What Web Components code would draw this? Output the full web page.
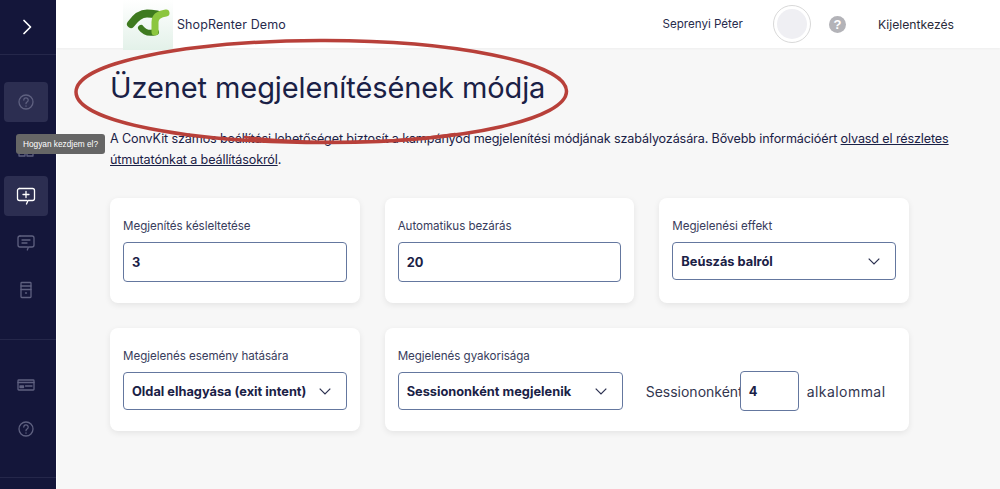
<!DOCTYPE html>
<html lang="hu">
<head>
<meta charset="utf-8">
<title>Üzenet megjelenítésének módja</title>
<style>
  html, body { margin: 0; height: 100%; overflow: hidden; }
  body { font-family: Inter, "Liberation Sans", sans-serif; color: #1a2146; background: #f7f7f7; }
  app-shell { height: 489px; }
</style>
</head>
<body>
<app-shell>
  <side-bar slot="side">
    <side-section slot="top" height="54" justify="center">
      <side-item icon="chevron" tone="bright"></side-item>
    </side-section>
    <side-section height="284" pad="27" gap="7">
      <side-item icon="help" boxed></side-item>
      <side-item icon="grid"></side-item>
      <side-item icon="add" boxed tone="bright"></side-item>
      <side-item icon="chat"></side-item>
      <side-item icon="doc"></side-item>
    </side-section>
    <side-section height="137" pad="25" gap="4">
      <side-item icon="card"></side-item>
      <side-item icon="help"></side-item>
    </side-section>
    <hover-tip>Hogyan kezdjem el?</hover-tip>
  </side-bar>

  <top-bar slot="top"></top-bar>

  <page-head slot="main">
    <span slot="title">Üzenet megjelenítésének módja</span>
    A ConvKit számos beállítási lehetőséget biztosít a kampányod megjelenítési módjának szabályozására. Bővebb információért <a href="#">olvasd el részletes útmutatónkat a beállításokról</a>.
  </page-head>

  <card-grid slot="main">
    <form-card label="Megjenítés késleltetése"><text-box value="3"></text-box></form-card>
    <form-card label="Automatikus bezárás"><text-box value="20"></text-box></form-card>
    <form-card label="Megjelenési effekt"><pick-box value="Beúszás balról"></pick-box></form-card>
    <form-card label="Megjelenés esemény hatására"><pick-box value="Oldal elhagyása (exit intent)"></pick-box></form-card>
    <form-card label="Megjelenés gyakorisága" wide>
      <freq-row></freq-row>
    </form-card>
  </card-grid>
  <red-mark slot="main"></red-mark>
</app-shell>

<script>
const ICONS = {
  chevron: '<path d="m10 5.500 6.500 6.500L10 18.500" stroke-width="1.700"/>',
  help: '<circle cx="12" cy="12" r="7"/><path d="M9.800 10a2.200 2.200 0 1 1 3.500 1.800c-.8.500-1.300 1-1.300 1.900"/><path d="M12 15.800v.4"/>',
  grid: '<rect x="5" y="5" width="6" height="6"/><rect x="13" y="5" width="6" height="6"/><rect x="5" y="13" width="6" height="6"/><rect x="13" y="13" width="6" height="6"/>',
  add: '<path d="M5.500 4.500h13a2 2 0 0 1 2 2v8a2 2 0 0 1-2 2h-4.500l-1.500 3.500"/><path d="M13 16.500H5.500a2 2 0 0 1-2-2v-8a2 2 0 0 1 2-2"/><path d="M12 7.500v6M9 10.500h6"/>',
  chat: '<path d="M6 5h12a2 2 0 0 1 2 2v7a2 2 0 0 1-2 2h-3.500l-1.200 3"/><path d="M13.500 16H6a2 2 0 0 1-2-2V7a2 2 0 0 1 2-2"/><path d="M8 9h8M8 12h5"/>',
  doc: '<rect x="7" y="4.500" width="10" height="15" rx=".8"/><path d="M7 8h10M7 11.500h10"/><path d="M11.500 15h1"/>',
  card: '<rect x="4" y="7" width="16" height="10" rx=".8"/><path d="M4 9.500h16"/><path d="M6 13h3.500v1.500H6zM11.500 13h6.500"/>'
};

class AppShell extends HTMLElement {
  constructor() {
    super();
    this.attachShadow({ mode: "open" });
    this.shadowRoot.innerHTML = `
      <style>
        :host { display: grid; grid-template-columns: 56px 1fr; grid-template-rows: 48px 1fr; }
        .side { grid-row: 1 / 3; }
        .top { grid-column: 2; position: relative; z-index: 1; }
        main { grid-column: 2; position: relative; padding: 0 0 0 53px; background: #f7f7f7; border-left: 1px solid #fff; box-sizing: border-box; }
      </style>
      <div class="side"><slot name="side"></slot></div>
      <div class="top"><slot name="top"></slot></div>
      <main><slot name="main"></slot></main>
    `;
  }
}

class SideBar extends HTMLElement {
  constructor() {
    super();
    this.attachShadow({ mode: "open" });
    this.shadowRoot.innerHTML = `
      <style>
        :host { display: flex; flex-direction: column; position: relative; height: 489px; width: 56px; background: #14163a; }
      </style>
      <slot name="top"></slot>
      <slot></slot>
    `;
  }
}

class SideSection extends HTMLElement {
  constructor() {
    super();
    this.attachShadow({ mode: "open" });
    const pad = this.getAttribute("pad") || 0;
    const gap = this.getAttribute("gap") || 0;
    const justify = this.getAttribute("justify") || "flex-start";
    this.shadowRoot.innerHTML = `
      <style>
        :host {
          display: flex; flex-direction: column; align-items: flex-start; box-sizing: content-box;
          height: ${this.getAttribute("height") - pad}px; padding: ${pad}px 0 0 4px; gap: ${gap}px;
          justify-content: ${justify}; border-bottom: 1px solid #25274a;
        }
      </style>
      <slot></slot>
    `;
  }
}

class SideItem extends HTMLElement {
  constructor() {
    super();
    this.attachShadow({ mode: "open" });
    const icon = ICONS[this.getAttribute("icon")];
    const bright = this.getAttribute("tone") === "bright";
    this.shadowRoot.innerHTML = `
      <style>
        :host { display: flex; align-items: center; justify-content: center; width: 44px; height: 40px; border-radius: 4px; color: ${bright ? "#fff" : "#5f6180"}; }
        :host([boxed]) { background: #2c2e51; }
        svg { width: 24px; height: 24px; fill: none; stroke: currentColor; stroke-width: 1.300; stroke-linecap: round; stroke-linejoin: round; }
      </style>
      <svg viewBox="0 0 24 24">${icon}</svg>
    `;
  }
}

class HoverTip extends HTMLElement {
  constructor() {
    super();
    this.attachShadow({ mode: "open" });
    this.shadowRoot.innerHTML = `
      <style>
        :host {
          position: absolute; left: 16px; top: 134px; width: 89px; height: 20px; z-index: 5;
          display: flex; align-items: center; justify-content: center; border-radius: 3px;
          background: #666; color: #fff; font: 8.300px "Liberation Sans", sans-serif; white-space: nowrap;
        }
      </style>
      <slot></slot>
    `;
  }
}

class TopBar extends HTMLElement {
  constructor() {
    super();
    this.attachShadow({ mode: "open" });
    this.shadowRoot.innerHTML = `
      <style>
        :host { display: flex; align-items: center; height: 48px; background: #fff; box-shadow: 0 1px 2px rgba(0,0,0,.04); font-size: 12.500px; color: #272b4d; }
        .logo { width: 50px; height: 50px; margin: 0 4px 0 67px; align-self: flex-start; background: linear-gradient(#fff, #e3f1e9); flex: none; }
        .name { letter-spacing: .1px; }
        .user { margin-left: auto; font-size: 11.600px; }
        .avatar { width: 38px; height: 38px; margin-left: 30px; border-radius: 50%; border: 1px solid #d9d9d9; background: #fff; box-sizing: border-box; display: flex; align-items: center; justify-content: center; flex: none; }
        .avatar i { width: 30px; height: 30px; border-radius: 50%; background: #efeff3; }
        .q { width: 17px; height: 17px; margin-left: 18px; border-radius: 50%; background: #b3b3b8; color: #fff; font: bold 13px/17px "Liberation Sans", sans-serif; text-align: center; flex: none; }
        .out { margin: 0 46px 0 32px; font-size: 12.200px; color: #2a2a3a; }
      </style>
      <div class="logo">
        <svg viewBox="0 0 50 50" width="50" height="50" fill="none" stroke-linecap="round">
          <path d="M8 24C13 17 18 13.500 24 13.500c4 0 7 .5 10 1" stroke="#3e7a1f" stroke-width="8"/>
          <path d="M18 28c3 4 8 6 15 4" stroke="#3e7a1f" stroke-width="6"/>
          <path d="M32 32V22c0-5 4-8 11-9" stroke="#8cc63f" stroke-width="7"/>
        </svg>
      </div>
      <span class="name">ShopRenter Demo</span>
      <span class="user">Seprenyi Péter</span>
      <div class="avatar"><i></i></div>
      <div class="q">?</div>
      <span class="out">Kijelentkezés</span>
    `;
  }
}

class PageHead extends HTMLElement {
  constructor() {
    super();
    this.attachShadow({ mode: "open" });
    this.shadowRoot.innerHTML = `
      <style>
        :host { display: block; width: 840px; }
        h1 { margin: 0; padding-top: 22px; font-size: 29px; line-height: 36px; font-weight: 400; color: #1a2146; letter-spacing: -.1px; }
        p { margin: 22px 0 0; font-size: 12.600px; line-height: 21px; color: #1a2146; letter-spacing: -.13px; }
        ::slotted(a) { color: inherit; }
      </style>
      <h1><slot name="title"></slot></h1>
      <p><slot></slot></p>
    `;
  }
}

class CardGrid extends HTMLElement {
  constructor() {
    super();
    this.attachShadow({ mode: "open" });
    this.shadowRoot.innerHTML = `
      <style>
        :host { display: grid; grid-template-columns: repeat(3, 1fr); gap: 25px; width: 799px; margin-top: 28px; }
      </style>
      <slot></slot>
    `;
  }
}

class FormCard extends HTMLElement {
  constructor() {
    super();
    this.attachShadow({ mode: "open" });
    this.shadowRoot.innerHTML = `
      <style>
        :host { display: block; box-sizing: border-box; padding: 20px 13px 21px; background: #fff; border-radius: 8px; box-shadow: 0 2px 6px rgba(0,0,0,.08); }
        :host([wide]) { grid-column: span 2; }
        label { display: block; height: 16px; margin-bottom: 8px; font-size: 11.600px; line-height: 16px; color: #383c5c; letter-spacing: -.05px; }
      </style>
      <label>${this.getAttribute("label")}</label>
      <slot></slot>
    `;
  }
}

const FIELD_CSS = `
  .box { box-sizing: border-box; display: flex; align-items: center; background: #fff; border: 1.500px solid #64779f; border-radius: 4px; padding: 0 8px; font-size: 12.800px; font-weight: 700; color: #1a2146; white-space: nowrap; }
`;

class TextBox extends HTMLElement {
  constructor() {
    super();
    this.attachShadow({ mode: "open" });
    this.shadowRoot.innerHTML = `
      <style>
        :host { display: block; }
        ${FIELD_CSS}
        .box { height: 40px; }
      </style>
      <div class="box">${this.getAttribute("value")}</div>
    `;
  }
}

class PickBox extends HTMLElement {
  constructor() {
    super();
    this.attachShadow({ mode: "open" });
    this.shadowRoot.innerHTML = `
      <style>
        :host { display: block; }
        ${FIELD_CSS}
        .box { height: 38px; justify-content: space-between; }
        svg { width: 12px; height: 7px; margin-right: 7px; fill: none; stroke: #2b3050; stroke-width: 1.200; flex: none; }
      </style>
      <div class="box"><span>${this.getAttribute("value")}</span>
        <svg viewBox="0 0 12 7"><path d="m.7.7 5.300 5.300L11.300.7"/></svg></div>
    `;
  }
}

class FreqRow extends HTMLElement {
  constructor() {
    super();
    this.attachShadow({ mode: "open" });
    this.shadowRoot.innerHTML = `
      <style>
        :host { display: flex; align-items: center; height: 38px; font-size: 14px; color: #33364f; white-space: nowrap; }
        pick-box { width: 225px; flex: none; }
        .lead { width: 94px; margin-left: 23px; flex: none; }
        .num { width: 59px; margin-right: 8px; flex: none; position: relative; }
        .tail { letter-spacing: .45px; }
      </style>
      <pick-box value="Sessiononként megjelenik"></pick-box>
      <span class="lead">Sessiononként</span>
      <text-box class="num" value="4"></text-box>
      <span class="tail">alkalommal</span>
    `;
  }
}

class RedMark extends HTMLElement {
  constructor() {
    super();
    this.attachShadow({ mode: "open" });
    this.shadowRoot.innerHTML = `
      <style>
        :host { position: absolute; left: -57px; top: -48px; width: 1000px; height: 489px; pointer-events: none; z-index: 4; }
      </style>
      <svg width="1000" height="489" fill="none" stroke="#b8403a" stroke-width="3.500" stroke-linecap="round">
        <path d="M320 40.500C450 40 566 62 566.500 91C567 118 470 142 330 142.500C190 143 76 122 76 92C76 62 190 41 320 40.500"/>
        <path d="M245 137C300 144 390 144 455 134" stroke-width="2.500"/>
      </svg>
    `;
  }
}

customElements.define("app-shell", AppShell);
customElements.define("side-bar", SideBar);
customElements.define("side-section", SideSection);
customElements.define("side-item", SideItem);
customElements.define("hover-tip", HoverTip);
customElements.define("top-bar", TopBar);
customElements.define("page-head", PageHead);
customElements.define("card-grid", CardGrid);
customElements.define("form-card", FormCard);
customElements.define("text-box", TextBox);
customElements.define("pick-box", PickBox);
customElements.define("freq-row", FreqRow);
customElements.define("red-mark", RedMark);
</script>
</body>
</html>
